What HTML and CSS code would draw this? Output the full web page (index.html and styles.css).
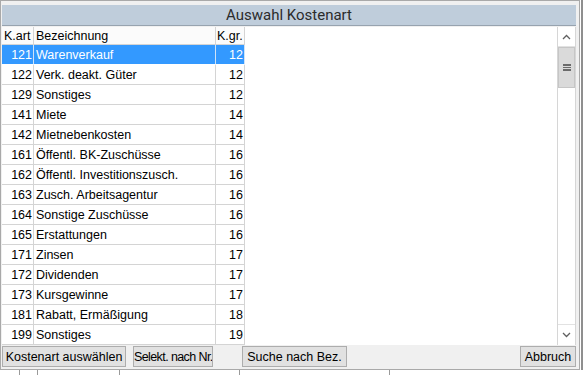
FILE: index.html
```html
<!DOCTYPE html>
<html lang="de">
<head>
  <meta charset="UTF-8" />
  <title>Auswahl Kostenart</title>
  <link rel="stylesheet" href="styles.css">
</head>
<body>
  <div class="desk">
    <div class="window">
      <div class="titlebar">Auswahl Kostenart</div>

      <div class="content">
        <div class="grid">
          <div class="row head">
            <div class="cell nr">K.art</div>
            <div class="cell name">Bezeichnung</div>
            <div class="cell gr">K.gr.</div>
          </div>
          <div class="row selected"><div class="cell nr">121</div><div class="cell name">Warenverkauf</div><div class="cell gr">12</div></div>
          <div class="row"><div class="cell nr">122</div><div class="cell name">Verk. deakt. Güter</div><div class="cell gr">12</div></div>
          <div class="row"><div class="cell nr">129</div><div class="cell name">Sonstiges</div><div class="cell gr">12</div></div>
          <div class="row"><div class="cell nr">141</div><div class="cell name">Miete</div><div class="cell gr">14</div></div>
          <div class="row"><div class="cell nr">142</div><div class="cell name">Mietnebenkosten</div><div class="cell gr">14</div></div>
          <div class="row"><div class="cell nr">161</div><div class="cell name">Öffentl. BK-Zuschüsse</div><div class="cell gr">16</div></div>
          <div class="row"><div class="cell nr">162</div><div class="cell name">Öffentl. Investitionszusch.</div><div class="cell gr">16</div></div>
          <div class="row"><div class="cell nr">163</div><div class="cell name">Zusch. Arbeitsagentur</div><div class="cell gr">16</div></div>
          <div class="row"><div class="cell nr">164</div><div class="cell name">Sonstige Zuschüsse</div><div class="cell gr">16</div></div>
          <div class="row"><div class="cell nr">165</div><div class="cell name">Erstattungen</div><div class="cell gr">16</div></div>
          <div class="row"><div class="cell nr">171</div><div class="cell name">Zinsen</div><div class="cell gr">17</div></div>
          <div class="row"><div class="cell nr">172</div><div class="cell name">Dividenden</div><div class="cell gr">17</div></div>
          <div class="row"><div class="cell nr">173</div><div class="cell name">Kursgewinne</div><div class="cell gr">17</div></div>
          <div class="row"><div class="cell nr">181</div><div class="cell name">Rabatt, Ermäßigung</div><div class="cell gr">18</div></div>
          <div class="row"><div class="cell nr">199</div><div class="cell name">Sonstiges</div><div class="cell gr">19</div></div>
        </div>

        <div class="scrollbar">
          <div class="sb-btn">
            <svg width="9" height="6" viewBox="0 0 9 6"><path d="M1 5 L4.5 1.5 L8 5" fill="none" stroke="#606060" stroke-width="1.3"/></svg>
          </div>
          <div class="sb-track">
            <div class="sb-thumb"><span class="grip"></span></div>
          </div>
          <div class="sb-btn down">
            <svg width="9" height="6" viewBox="0 0 9 6"><path d="M1 1 L4.5 4.5 L8 1" fill="none" stroke="#606060" stroke-width="1.3"/></svg>
          </div>
        </div>
      </div>

      <div class="buttons">
        <button class="btn btn-select">Kostenart auswählen</button>
        <button class="btn btn-nr">Selekt. nach Nr.</button>
        <button class="btn btn-bez">Suche nach Bez.</button>
        <button class="btn btn-cancel">Abbruch</button>
      </div>
    </div>
    <div class="backdrop-side"></div>
  </div>
  <div class="backdrop-bottom">
    <span class="bcell w20"></span>
    <span class="bcell w18"></span>
    <span class="bcell w82"></span>
    <span class="bcell w120"></span>
    <span class="bcell w150"></span>
  </div>
</body>
</html>
```

FILE: styles.css
```css
* {
  margin: 0;
  padding: 0;
  box-sizing: border-box;
}
body {
  background: #fff;
  font-family: 'Liberation Sans', Arial, sans-serif;
  font-size: 12.5px;
  color: #000;
  width: 585px;
  height: 375px;
  overflow: hidden;
}
.desk {
  display: flex;
}
.window {
  width: 580px;
  height: 370px;
  background: #f0f0f0;
  border: 1px solid #a9a9a9;
  padding: 4px 3px 0 1px;
  display: flex;
  flex-direction: column;
}
.titlebar {
  height: 21px;
  background: #bfcddb;
  border-bottom: 1px solid #97a3af;
  text-align: center;
  font-family: Roboto, 'Liberation Sans', sans-serif;
  font-size: 15px;
  line-height: 21px;
  color: #2b2b2b;
}
.content {
  margin-top: 1px;
  height: 318px;
  display: flex;
  background: #fff;
}
.grid {
  flex: 1;
}
.row {
  display: flex;
  height: 20px;
}
.row.head {
  height: 18px;
}
.cell {
  border-right: 1px solid #d4d4d4;
  border-bottom: 1px solid #d4d4d4;
  padding: 1px 2px 0;
  line-height: 18px;
  white-space: nowrap;
  overflow: hidden;
}
.head .cell {
  line-height: 17px;
  background: #fbfbfb;
}
.nr {
  width: 32px;
  text-align: right;
  padding-right: 1px;
}
.head .nr {
  text-align: left;
}
.name {
  width: 182px;
}
.gr {
  width: 29px;
  text-align: right;
  padding-right: 1px;
}
.head .gr {
  text-align: left;
  padding-left: 1px;
}
.selected .cell {
  background: #3399ff;
  color: #fff;
  border-right-color: #cfe3f7;
  border-bottom-color: #fff;
}

/* scrollbar */
.scrollbar {
  width: 19px;
  border-left: 1px solid #d6d6d6;
  border-right: 1px solid #d6d6d6;
  display: flex;
  flex-direction: column;
  background: #fff;
}
.sb-btn {
  height: 20px;
  display: flex;
  align-items: center;
  justify-content: center;
  border-bottom: 1px solid #e2e2e2;
}
.sb-btn.down {
  border-bottom: none;
  border-top: 1px solid #e2e2e2;
  height: 21px;
}
.sb-track {
  flex: 1;
}
.sb-thumb {
  height: 41px;
  background: #dadada;
  border: 1px solid #c6c6c6;
  display: flex;
  align-items: center;
  justify-content: center;
}
.grip {
  width: 8px;
  height: 7px;
  border-top: 2px solid #6a6a6a;
  border-bottom: 2px solid #6a6a6a;
  position: relative;
}
.grip::after {
  content: "";
  position: absolute;
  left: 0;
  right: 0;
  top: 1px;
  border-top: 1px solid #6a6a6a;
}

/* bottom button strip */
.buttons {
  display: flex;
  padding-top: 1px;
}
.btn {
  height: 21px;
  background: #e1e1e1;
  border: 1px solid #adadad;
  font-family: 'Liberation Sans', Arial, sans-serif;
  font-size: 12.5px;
  color: #000;
  padding: 0 2px;
  white-space: nowrap;
  overflow: hidden;
}
.btn-select {
  width: 124px;
}
.btn-nr {
  width: 80px;
  margin-left: 7px;
  padding: 0;
  letter-spacing: -0.6px;
}
.btn-bez {
  width: 105px;
  margin-left: 29px;
}
.btn-cancel {
  width: 56px;
  margin-left: auto;
}

/* application behind the dialog */
.backdrop-side {
  flex: 1;
  border-left: 2px solid #8f8f8f;
  margin-left: 1px;
}
.backdrop-bottom {
  display: flex;
  height: 5px;
}
.bcell {
  border-right: 1px solid #9a9a9a;
}
.w20 { width: 20px; }
.w18 { width: 18px; }
.w82 { width: 82px; }
.w120 { width: 120px; }
.w150 { width: 150px; }
```
